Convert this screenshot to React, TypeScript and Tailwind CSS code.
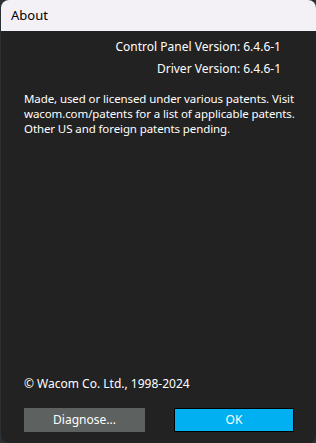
export default function App() {
  return (
    <div className="w-[316px] h-[443px] bg-[#2b3035] font-['Noto_Sans',sans-serif] text-[12px]">
      <div className="ml-px w-[315px] h-[443px] flex flex-col rounded-lg overflow-hidden bg-[#222222]">
        {/* title bar */}
        <div className="h-[31px] shrink-0 bg-[#f3f0f6] flex items-center pl-[10px] text-[13px] text-black">
          About
        </div>

        <div className="flex-1 flex flex-col text-white">
          <div className="flex flex-col items-end pr-[35px] pt-[8px] gap-[6px] leading-[16px]">
            <p>Control Panel Version: 6.4.6-1</p>
            <p>Driver Version: 6.4.6-1</p>
          </div>

          <p className="pl-[23px] pr-[10px] mt-[14px] leading-[15px] text-[11.5px] tracking-[-0.1px]">
            Made, used or licensed under various patents. Visit wacom.com/patents for a list of applicable patents. Other US and foreign patents pending.
          </p>

          <div className="flex-1" />

          <p className="pl-[23px] leading-[16px]">© Wacom Co. Ltd., 1998-2024</p>

          <div className="flex justify-between pl-[23px] pr-[22px] pt-[16px] pb-[11px]">
            <button className="w-[121px] h-[24px] bg-[#5d615f] text-white">Diagnose...</button>
            <button className="w-[120px] h-[24px] bg-[#00b0f0] border border-black text-white">OK</button>
          </div>
        </div>
      </div>
    </div>
  )
}
